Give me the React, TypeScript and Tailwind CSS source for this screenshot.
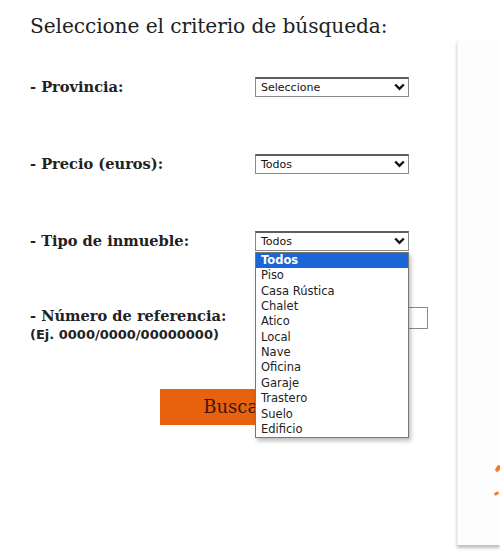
import React from 'react';

const tipos = [
  'Todos',
  'Piso',
  'Casa Rústica',
  'Chalet',
  'Atico',
  'Local',
  'Nave',
  'Oficina',
  'Garaje',
  'Trastero',
  'Suelo',
  'Edificio',
];

function Chevron() {
  return (
    <svg width="11" height="8" viewBox="0 0 11 8" className="shrink-0">
      <path d="M1.2 1.5 L5.5 5.8 L9.8 1.5" fill="none" stroke="#111" strokeWidth="2.4" />
    </svg>
  );
}

function FakeSelect({ value }: { value: string }) {
  return (
    <div className="flex h-[20px] w-[154px] items-center justify-between border border-[#8a8a8a] border-t-[#5e5e5e] border-t-2 bg-white pl-[5px] pr-[3px] font-['DejaVu_Sans',sans-serif] text-[11px] text-[#111]">
      <span className="leading-none">{value}</span>
      <Chevron />
    </div>
  );
}

export default function App() {
  return (
    <div className="flex min-h-[553px] w-[500px] overflow-hidden bg-white">
      {/* main form */}
      <div className="w-[457px] shrink-0 pl-[30px] pt-[12px] font-['DejaVu_Serif',serif] text-[#222]">
        <h1 className="text-[20.2px] leading-[28px] tracking-[-0.1px]">Seleccione el criterio de búsqueda:</h1>

        <div className="mt-[36px] grid grid-cols-[225px_auto] items-center">
          <span className="text-[14.6px] font-bold">- Provincia:</span>
          <FakeSelect value="Seleccione" />
        </div>

        <div className="mt-[55px] grid grid-cols-[225px_auto] items-center">
          <span className="text-[14.6px] font-bold">- Precio (euros):</span>
          <FakeSelect value="Todos" />
        </div>

        <div className="mt-[55px] grid grid-cols-[225px_auto] items-center">
          <span className="text-[14.6px] font-bold">- Tipo de inmueble:</span>
          <div className="relative">
            <FakeSelect value="Todos" />
            {/* open list */}
            <div className="absolute left-0 top-[21px] z-10 w-[154px] border border-[#777] bg-white font-['DejaVu_Sans',sans-serif] text-[11.5px] text-[#222] shadow-[2px_3px_4px_rgba(0,0,0,0.25)]">
              {tipos.map((t, i) => (
                <div
                  key={t}
                  className={
                    i === 0
                      ? 'h-[15.4px] bg-[#1a66d6] pl-[5px] leading-[15px] font-bold text-white'
                      : 'h-[15.4px] pl-[5px] leading-[15px]'
                  }
                >
                  {t}
                </div>
              ))}
            </div>
          </div>
        </div>

        <div className="mt-[54px] grid grid-cols-[225px_auto] items-start">
          <div>
            <div className="text-[14.6px] font-bold leading-[20px]">- Número de referencia:</div>
            <div className="font-['DejaVu_Sans',sans-serif] text-[13px] font-semibold leading-[17px] text-[#222]">
              (Ej. 0000/0000/00000000)
            </div>
          </div>
          <div className="mt-[1px] h-[22px] w-[173px] border border-[#888] bg-white" />
        </div>

        <div className="mt-[46px] pl-[130px]">
          <button className="h-[36px] w-[150px] bg-[#e8610f] font-['DejaVu_Serif',serif] text-[18px] text-[#3a1a08]">
            Buscar
          </button>
        </div>
      </div>

      {/* side panel */}
      <div className="mt-[40px] h-[505px] flex-1 border-l border-[#eeeeee] bg-[#fdfdfd] shadow-[0_3px_3px_rgba(0,0,0,0.25)]">
        <div className="relative h-full">
          <div className="absolute left-[38px] top-[425px] h-[7px] w-[4px] rotate-[30deg] rounded-full bg-[#f07a2a]" />
          <div className="absolute left-[36px] top-[452px] h-[3px] w-[5px] -rotate-[30deg] rounded-full bg-[#f07a2a]" />
        </div>
      </div>
    </div>
  );
}
